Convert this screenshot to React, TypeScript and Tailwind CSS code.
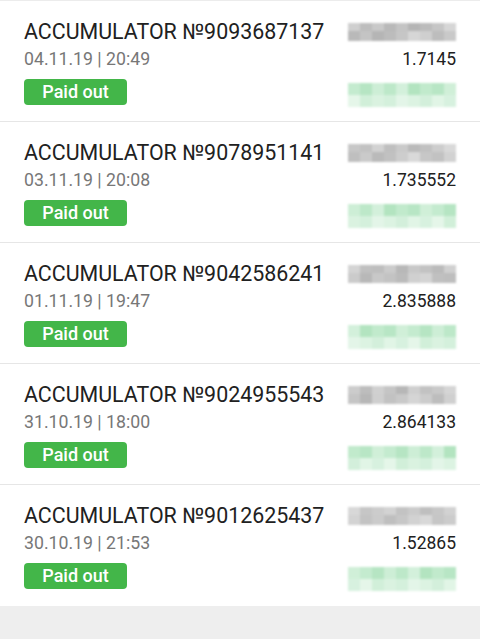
const items = [
  { id: '9093687137', date: '04.11.19 | 20:49', amount: '1.7145' },
  { id: '9078951141', date: '03.11.19 | 20:08', amount: '1.735552' },
  { id: '9042586241', date: '01.11.19 | 19:47', amount: '2.835888' },
  { id: '9024955543', date: '31.10.19 | 18:00', amount: '2.864133' },
  { id: '9012625437', date: '30.10.19 | 21:53', amount: '1.52865' },
];

const grays = [
  ['#cfcfcf', '#bdbdbd', '#c9c9c9', '#b9b9b9', '#c4c4c4', '#b5b5b5', '#bcbcbc', '#c6c6c6', '#d6d6d6'],
  ['#c7c7c7', '#c2c2c2', '#d2d2d2', '#bfbfbf', '#cacaca', '#bababa', '#c1c1c1', '#cdcdcd', '#d9d9d9'],
  ['#d4d4d4', '#c0c0c0', '#bebebe', '#cbcbcb', '#b8b8b8', '#c8c8c8', '#c3c3c3', '#bbbbbb', '#d0d0d0'],
  ['#cccccc', '#bdbdbd', '#d0d0d0', '#c5c5c5', '#b7b7b7', '#cfcfcf', '#c2c2c2', '#c9c9c9', '#d5d5d5'],
  ['#d8d8d8', '#c6c6c6', '#cccccc', '#d3d3d3', '#c3c3c3', '#cbcbcb', '#bfbfbf', '#c7c7c7', '#d2d2d2'],
];

const greens = ['#c4ebcf', '#b6e5c3', '#cdeed6', '#bde8c9', '#d3f0db', '#b3e4c0', '#c1eacc', '#b8e6c5', '#d0efd8'];

// pixelated placeholders standing in for the blurred-out parts of the screenshot
function Mosaic({ colors }: { colors: string[] }) {
  return (
    <div className="flex flex-col w-[108px] blur-[1px]">
      <div className="flex h-[8px]">
        {colors.map((c, i) => (
          <div key={i} className="flex-1" style={{ backgroundColor: c }} />
        ))}
      </div>
      <div className="flex h-[10px]">
        {colors.map((c, i) => (
          <div key={i} className="flex-1" style={{ backgroundColor: colors[(i + 3) % colors.length] }} />
        ))}
      </div>
    </div>
  );
}

function GreenMosaic({ shift }: { shift: number }) {
  return (
    <div className="flex flex-col w-[108px] blur-[1px]">
      <div className="flex h-[12px]">
        {greens.map((_, i) => (
          <div key={i} className="flex-1" style={{ backgroundColor: greens[(i + shift) % greens.length] }} />
        ))}
      </div>
      <div className="flex h-[12px]">
        {greens.map((_, i) => (
          <div key={i} className="flex-1" style={{ backgroundColor: greens[(i + shift + 4) % greens.length], opacity: 0.6 }} />
        ))}
      </div>
    </div>
  );
}

export default function App() {
  return (
    <div className="w-[480px] h-[639px] bg-[#eeeeee] font-['Roboto',sans-serif] overflow-hidden">
      <div className="bg-white border-t border-[#ececec]">
        {items.map((item, idx) => (
          <div
            key={item.id}
            className={`flex justify-between h-[121px] px-6 ${idx < items.length - 1 ? 'border-b border-[#e6e6e6]' : ''}`}
          >
            <div className="flex flex-col pt-[18px]">
              <p className="text-[21.4px] leading-[26px] text-[#212121]">ACCUMULATOR №{item.id}</p>
              <p className="mt-[3px] text-[17.7px] leading-[22px] text-[#777777]">{item.date}</p>
              <div className="mt-[9px] w-[103px] h-[26px] rounded-[4px] bg-[#43b649] flex items-center justify-center">
                <span className="text-[18px] font-medium text-white leading-none">Paid out</span>
              </div>
            </div>
            <div className="flex flex-col items-end pt-[22px]">
              <Mosaic colors={grays[idx]} />
              <p className="mt-[7px] text-[17.5px] leading-[22px] text-[#212121]">{item.amount}</p>
              <div className="mt-[13px]">
                <GreenMosaic shift={idx * 2} />
              </div>
            </div>
          </div>
        ))}
      </div>
    </div>
  );
}
